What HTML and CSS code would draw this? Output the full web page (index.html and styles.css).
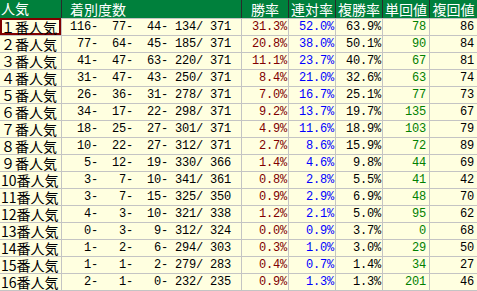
FILE: index.html
```html
<!DOCTYPE html>
<html lang="ja">
<head>
<meta charset="utf-8">
<title>人気別成績</title>
<link rel="stylesheet" href="styles.css">
</head>
<body>
<div class="table">
  <div class="row head">
    <div class="c name">人気</div>
    <div class="c count">着別度数</div>
    <div class="c">勝率</div>
    <div class="c">連対率</div>
    <div class="c">複勝率</div>
    <div class="c">単回値</div>
    <div class="c last">複回値</div>
  </div>
  <div class="row"><div class="c name sel">１番人気</div><div class="c count">116-  77-  44- 134/ 371</div><div class="c pct win">31.3%</div><div class="c pct ren">52.0%</div><div class="c pct">63.9%</div><div class="c val tan">78</div><div class="c val last">86</div></div>
  <div class="row"><div class="c name">２番人気</div><div class="c count"> 77-  64-  45- 185/ 371</div><div class="c pct win">20.8%</div><div class="c pct ren">38.0%</div><div class="c pct">50.1%</div><div class="c val tan">90</div><div class="c val last">84</div></div>
  <div class="row"><div class="c name">３番人気</div><div class="c count"> 41-  47-  63- 220/ 371</div><div class="c pct win">11.1%</div><div class="c pct ren">23.7%</div><div class="c pct">40.7%</div><div class="c val tan">67</div><div class="c val last">81</div></div>
  <div class="row"><div class="c name">４番人気</div><div class="c count"> 31-  47-  43- 250/ 371</div><div class="c pct win">8.4%</div><div class="c pct ren">21.0%</div><div class="c pct">32.6%</div><div class="c val tan">63</div><div class="c val last">74</div></div>
  <div class="row"><div class="c name">５番人気</div><div class="c count"> 26-  36-  31- 278/ 371</div><div class="c pct win">7.0%</div><div class="c pct ren">16.7%</div><div class="c pct">25.1%</div><div class="c val tan">77</div><div class="c val last">73</div></div>
  <div class="row"><div class="c name">６番人気</div><div class="c count"> 34-  17-  22- 298/ 371</div><div class="c pct win">9.2%</div><div class="c pct ren">13.7%</div><div class="c pct">19.7%</div><div class="c val tan">135</div><div class="c val last">67</div></div>
  <div class="row"><div class="c name">７番人気</div><div class="c count"> 18-  25-  27- 301/ 371</div><div class="c pct win">4.9%</div><div class="c pct ren">11.6%</div><div class="c pct">18.9%</div><div class="c val tan">103</div><div class="c val last">79</div></div>
  <div class="row"><div class="c name">８番人気</div><div class="c count"> 10-  22-  27- 312/ 371</div><div class="c pct win">2.7%</div><div class="c pct ren">8.6%</div><div class="c pct">15.9%</div><div class="c val tan">72</div><div class="c val last">89</div></div>
  <div class="row"><div class="c name">９番人気</div><div class="c count">  5-  12-  19- 330/ 366</div><div class="c pct win">1.4%</div><div class="c pct ren">4.6%</div><div class="c pct">9.8%</div><div class="c val tan">44</div><div class="c val last">69</div></div>
  <div class="row"><div class="c name">10番人気</div><div class="c count">  3-   7-  10- 341/ 361</div><div class="c pct win">0.8%</div><div class="c pct ren">2.8%</div><div class="c pct">5.5%</div><div class="c val tan">41</div><div class="c val last">42</div></div>
  <div class="row"><div class="c name">11番人気</div><div class="c count">  3-   7-  15- 325/ 350</div><div class="c pct win">0.9%</div><div class="c pct ren">2.9%</div><div class="c pct">6.9%</div><div class="c val tan">48</div><div class="c val last">70</div></div>
  <div class="row"><div class="c name">12番人気</div><div class="c count">  4-   3-  10- 321/ 338</div><div class="c pct win">1.2%</div><div class="c pct ren">2.1%</div><div class="c pct">5.0%</div><div class="c val tan">95</div><div class="c val last">62</div></div>
  <div class="row"><div class="c name">13番人気</div><div class="c count">  0-   3-   9- 312/ 324</div><div class="c pct win">0.0%</div><div class="c pct ren">0.9%</div><div class="c pct">3.7%</div><div class="c val tan">0</div><div class="c val last">68</div></div>
  <div class="row"><div class="c name">14番人気</div><div class="c count">  1-   2-   6- 294/ 303</div><div class="c pct win">0.3%</div><div class="c pct ren">1.0%</div><div class="c pct">3.0%</div><div class="c val tan">29</div><div class="c val last">50</div></div>
  <div class="row"><div class="c name">15番人気</div><div class="c count">  1-   1-   2- 279/ 283</div><div class="c pct win">0.4%</div><div class="c pct ren">0.7%</div><div class="c pct">1.4%</div><div class="c val tan">34</div><div class="c val last">27</div></div>
  <div class="row"><div class="c name">16番人気</div><div class="c count">  2-   1-   0- 232/ 235</div><div class="c pct win">0.9%</div><div class="c pct ren">1.3%</div><div class="c pct">1.3%</div><div class="c val tan">201</div><div class="c val last">46</div></div>
</div>
</body>
</html>
```

FILE: styles.css
```css
html, body {
  margin: 0;
  padding: 0;
  background: #ffffff;
}

.table {
  width: 477px;
  background: #ffffe0;
  font-family: "Noto Sans CJK JP", sans-serif;
  color: #000;
}

.row {
  display: grid;
  grid-template-columns: 62px 180px repeat(5, 47px);
  height: 17px;
  border-bottom: 1px solid #c4c4c4;
  box-sizing: border-box;
}

.row.head {
  height: 19px;
  background: #00803c;
  color: #ffffff;
}

.c {
  box-sizing: border-box;
  border-right: 1px solid #c4c4c4;
  height: 16px;
  line-height: 16px;
  white-space: pre;
  font-family: "Liberation Mono", monospace;
  font-size: 12px;
  letter-spacing: -0.2px;
}

.c.last {
  border-right: none;
}

.head .c {
  height: 18px;
  line-height: 18px;
  font-family: "Noto Sans CJK JP", sans-serif;
  font-size: 14px;
  letter-spacing: 0;
  text-align: center;
  border-right: 1px solid #2a2a2a;
}

.head .c.last {
  border-right: none;
}

.head .c.name {
  text-align: left;
  padding-left: 1px;
}

.head .c.count {
  text-align: left;
  padding-left: 8px;
}

.c.name {
  font-family: "Noto Sans CJK JP", sans-serif;
  font-size: 14px;
  line-height: 17px;
  letter-spacing: 0;
  padding-left: 1px;
}

.c.sel {
  box-shadow: inset 0 0 0 2px #800000;
  height: 17px;
  margin-top: -1px;
  line-height: 18px;
}

.c.count {
  text-align: right;
  padding-right: 10px;
}

.c.pct {
  text-align: right;
  padding-right: 1px;
}

.c.val {
  text-align: right;
  padding-right: 3px;
}

.win {
  color: #800000;
}

.ren {
  color: #0000ff;
}

.tan {
  color: #008000;
}
```
